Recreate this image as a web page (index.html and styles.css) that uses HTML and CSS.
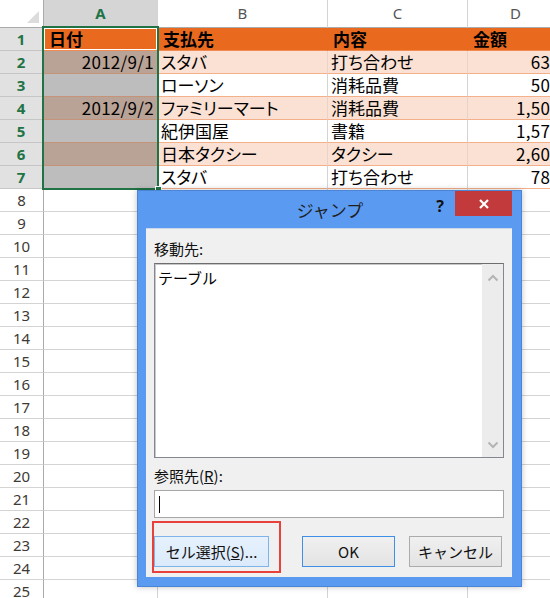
FILE: index.html
```html
<!DOCTYPE html>
<html lang="ja">
<head>
<meta charset="utf-8">
<title>ジャンプ</title>
<link rel="stylesheet" href="styles.css">
</head>
<body>
<div class="sheet">
  <div class="grid">
    <div class="corner"><span class="tri"></span></div>
    <div class="ch ch-sel">A</div><div class="ch">B</div><div class="ch">C</div><div class="ch">D</div>

    <div class="rh rh-sel">1</div><div class="c hd active">日付</div><div class="c hd">支払先</div><div class="c hd">内容</div><div class="c hd">金額</div>
    <div class="rh rh-sel">2</div><div class="c sp num">2012/9/1</div><div class="c pe">スタバ</div><div class="c pe">打ち合わせ</div><div class="c pe num">630</div>
    <div class="rh rh-sel">3</div><div class="c sw"></div><div class="c wt">ローソン</div><div class="c wt">消耗品費</div><div class="c wt num">504</div>
    <div class="rh rh-sel">4</div><div class="c sp num">2012/9/2</div><div class="c pe">ファミリーマート</div><div class="c pe">消耗品費</div><div class="c pe num">1,507</div>
    <div class="rh rh-sel">5</div><div class="c sw"></div><div class="c wt">紀伊国屋</div><div class="c wt">書籍</div><div class="c wt num">1,575</div>
    <div class="rh rh-sel">6</div><div class="c sp"></div><div class="c pe">日本タクシー</div><div class="c pe">タクシー</div><div class="c pe num">2,600</div>
    <div class="rh rh-sel">7</div><div class="c sw"></div><div class="c wt">スタバ</div><div class="c wt">打ち合わせ</div><div class="c wt num">780</div>

    <div class="rh">8</div><div class="c"></div><div class="c"></div><div class="c"></div><div class="c"></div>
    <div class="rh">9</div><div class="c"></div><div class="c"></div><div class="c"></div><div class="c"></div>
    <div class="rh">10</div><div class="c"></div><div class="c"></div><div class="c"></div><div class="c"></div>
    <div class="rh">11</div><div class="c"></div><div class="c"></div><div class="c"></div><div class="c"></div>
    <div class="rh">12</div><div class="c"></div><div class="c"></div><div class="c"></div><div class="c"></div>
    <div class="rh">13</div><div class="c"></div><div class="c"></div><div class="c"></div><div class="c"></div>
    <div class="rh">14</div><div class="c"></div><div class="c"></div><div class="c"></div><div class="c"></div>
    <div class="rh">15</div><div class="c"></div><div class="c"></div><div class="c"></div><div class="c"></div>
    <div class="rh">16</div><div class="c"></div><div class="c"></div><div class="c"></div><div class="c"></div>
    <div class="rh">17</div><div class="c"></div><div class="c"></div><div class="c"></div><div class="c"></div>
    <div class="rh">18</div><div class="c"></div><div class="c"></div><div class="c"></div><div class="c"></div>
    <div class="rh">19</div><div class="c"></div><div class="c"></div><div class="c"></div><div class="c"></div>
    <div class="rh">20</div><div class="c"></div><div class="c"></div><div class="c"></div><div class="c"></div>
    <div class="rh">21</div><div class="c"></div><div class="c"></div><div class="c"></div><div class="c"></div>
    <div class="rh">22</div><div class="c"></div><div class="c"></div><div class="c"></div><div class="c"></div>
    <div class="rh">23</div><div class="c"></div><div class="c"></div><div class="c"></div><div class="c"></div>
    <div class="rh">24</div><div class="c"></div><div class="c"></div><div class="c"></div><div class="c"></div>
    <div class="rh">25</div><div class="c"></div><div class="c"></div><div class="c"></div><div class="c"></div>
  </div>

  <div class="selection"><span class="handle"></span></div>

  <div class="dialog">
    <div class="dtitle">
      <span class="ttext">ジャンプ</span>
      <span class="help">?</span>
      <span class="close">
        <svg width="12" height="12" viewBox="0 0 12 12"><path d="M2 2 L10 10 M10 2 L2 10" stroke="#fff" stroke-width="2.2" fill="none"/></svg>
      </span>
    </div>
    <div class="dbody">
      <div class="lbl">移動先:</div>
      <div class="list">
        <div class="item">テーブル</div>
        <div class="vscroll">
          <svg class="arr" width="12" height="8" viewBox="0 0 12 8"><path d="M1.5 6.5 L6 2 L10.5 6.5" stroke="#b4b4b4" stroke-width="2" fill="none"/></svg>
          <svg class="arr" width="12" height="8" viewBox="0 0 12 8"><path d="M1.5 1.5 L6 6 L10.5 1.5" stroke="#b4b4b4" stroke-width="2" fill="none"/></svg>
        </div>
      </div>
      <div class="lbl lbl2">参照先(<u>R</u>):</div>
      <div class="input"><span class="caret"></span></div>
      <div class="btns">
        <div class="btn btn-hover">セル選択(<u>S</u>)...</div>
        <div class="btn btn-def">OK</div>
        <div class="btn">キャンセル</div>
      </div>
    </div>
  </div>

  <div class="annot"></div>
</div>
</body>
</html>
```

FILE: styles.css
```css
html, body {
  margin: 0;
  padding: 0;
  background: #ffffff;
}

.sheet {
  position: relative;
  width: 550px;
  height: 598px;
  overflow: hidden;
  font-family: "Noto Sans CJK JP", "Noto Sans", sans-serif;
}

.grid {
  display: grid;
  grid-template-columns: 44px 114px 170px 140px 96px;
  grid-template-rows: 28px repeat(25, 23px);
}

.corner {
  background: #ffffff;
  border-right: 1px solid #ababab;
  border-bottom: 1px solid #ababab;
  position: relative;
}
.tri {
  position: absolute;
  right: 4px;
  bottom: 4px;
  width: 0;
  height: 0;
  border-left: 12px solid transparent;
  border-bottom: 12px solid #dcdcdc;
}

.ch {
  background: #ffffff;
  border-right: 1px solid #d4d4d4;
  border-bottom: 1px solid #ababab;
  text-align: center;
  font-family: "Noto Sans", sans-serif;
  font-size: 15px;
  line-height: 27px;
  color: #555;
}
.ch-sel {
  background: #d5d5d5;
  color: #217346;
  font-weight: bold;
  border-bottom: 2px solid #217346;
  line-height: 26px;
}

.rh {
  background: #ffffff;
  border-right: 1px solid #ababab;
  border-bottom: 1px solid #d4d4d4;
  text-align: center;
  font-family: "Noto Sans", sans-serif;
  font-size: 15px;
  line-height: 22px;
  color: #3e3a36;
}
.rh-sel {
  background: #e1e1e1;
  color: #217346;
  font-weight: bold;
  border-right: 2px solid #217346;
  border-bottom-color: #c6c6c6;
}

.c {
  border-right: 1px solid #d4d4d4;
  border-bottom: 1px solid #d4d4d4;
  font-size: 17px;
  line-height: 22px;
  padding: 0 3px;
  white-space: nowrap;
  color: #000;
  font-feature-settings: "palt" 1;
}
.num {
  text-align: right;
  letter-spacing: 0.3px;
}

.hd {
  background: #e96a1e;
  border-right-color: #e96a1e;
  border-bottom-color: #ee8c53;
  font-weight: bold;
  padding-left: 5px;
}
.active {
  box-shadow: inset 0 0 0 1px #ffffff;
}
.pe {
  background: #fbe1d3;
  border-right-color: #e9d3c8;
  border-bottom-color: #f4b08a;
}
.wt {
  background: #ffffff;
  border-bottom-color: #f4b08a;
}
.sp {
  background: #b9a396;
  border-right-color: #b9a396;
  border-bottom-color: #c5927a;
}
.sw {
  background: #bdbdbd;
  border-right-color: #bdbdbd;
  border-bottom-color: #c5927a;
}

.selection {
  position: absolute;
  left: 42px;
  top: 26px;
  width: 113px;
  height: 160px;
  border: 2px solid #217346;
}
.handle {
  position: absolute;
  right: -5px;
  bottom: -5px;
  width: 5px;
  height: 5px;
  background: #217346;
  border: 1px solid #ffffff;
}

/* dialog */
.dialog {
  position: absolute;
  left: 137px;
  top: 190px;
  width: 385px;
  height: 397px;
  box-sizing: border-box;
  background: #5b9af1;
  border: 1px solid #4c85d6;
  padding: 0 9px 9px 8px;
  display: flex;
  flex-direction: column;
  box-shadow: 0 0 6px rgba(0, 0, 0, 0.25);
}
.dtitle {
  height: 37px;
  flex: none;
  display: flex;
  align-items: center;
  justify-content: center;
  position: relative;
}
.ttext {
  font-size: 17px;
  color: #1f1f1f;
  margin-left: 2px;
}
.help {
  position: absolute;
  right: 68px;
  top: 4px;
  font-family: "Noto Sans", sans-serif;
  font-weight: bold;
  font-size: 16px;
  color: #111;
}
.close {
  position: absolute;
  right: 0;
  top: 0;
  width: 57px;
  height: 25px;
  background: #c23a3c;
  display: flex;
  align-items: center;
  justify-content: center;
}

.dbody {
  flex: 1;
  background: #f0f0f0;
  border-top: 1px solid #c8d7ea;
  padding: 10px 8px 0 8px;
  display: flex;
  flex-direction: column;
}
.lbl {
  font-size: 15px;
  line-height: 20px;
  color: #111;
  height: 20px;
}
.list {
  margin-top: 4px;
  height: 195px;
  box-sizing: border-box;
  background: #ffffff;
  border: 1px solid #828790;
  border-top-color: #6e6e6e;
  box-shadow: inset 1px 1px 0 #c8c8c8;
  display: flex;
}
.item {
  flex: 1;
  font-size: 15px;
  line-height: 20px;
  padding: 4px 0 0 3px;
  color: #000;
}
.vscroll {
  width: 21px;
  background: #ececec;
  display: flex;
  flex-direction: column;
  justify-content: space-between;
  align-items: center;
  padding: 10px 0 8px;
}
.arr { display: block; }

.lbl2 { margin-top: 8px; }

.input {
  margin-top: 4px;
  height: 28px;
  box-sizing: border-box;
  background: #ffffff;
  border: 1px solid #a6a6a6;
  padding: 5px 0 0 4px;
}
.caret {
  display: block;
  width: 1px;
  height: 17px;
  background: #000;
}

.btns {
  margin-top: 18px;
  display: flex;
}
.btn {
  width: 93px;
  height: 31px;
  box-sizing: border-box;
  border: 1px solid #acacac;
  background: linear-gradient(#f0f0f0, #e3e3e3);
  font-size: 15px;
  line-height: 29px;
  text-align: center;
  color: #111;
  margin-left: 14px;
}
.btn-hover {
  width: 115px;
  margin-left: 0;
  background: linear-gradient(#e6f1fc, #dbeafb);
  border-color: #7eb4ea;
}
.btn-def {
  margin-left: 33px;
  border-color: #3c90e8;
}

.annot {
  position: absolute;
  left: 152px;
  top: 521px;
  width: 125px;
  height: 48px;
  border: 2px solid #e8413b;
}
```
